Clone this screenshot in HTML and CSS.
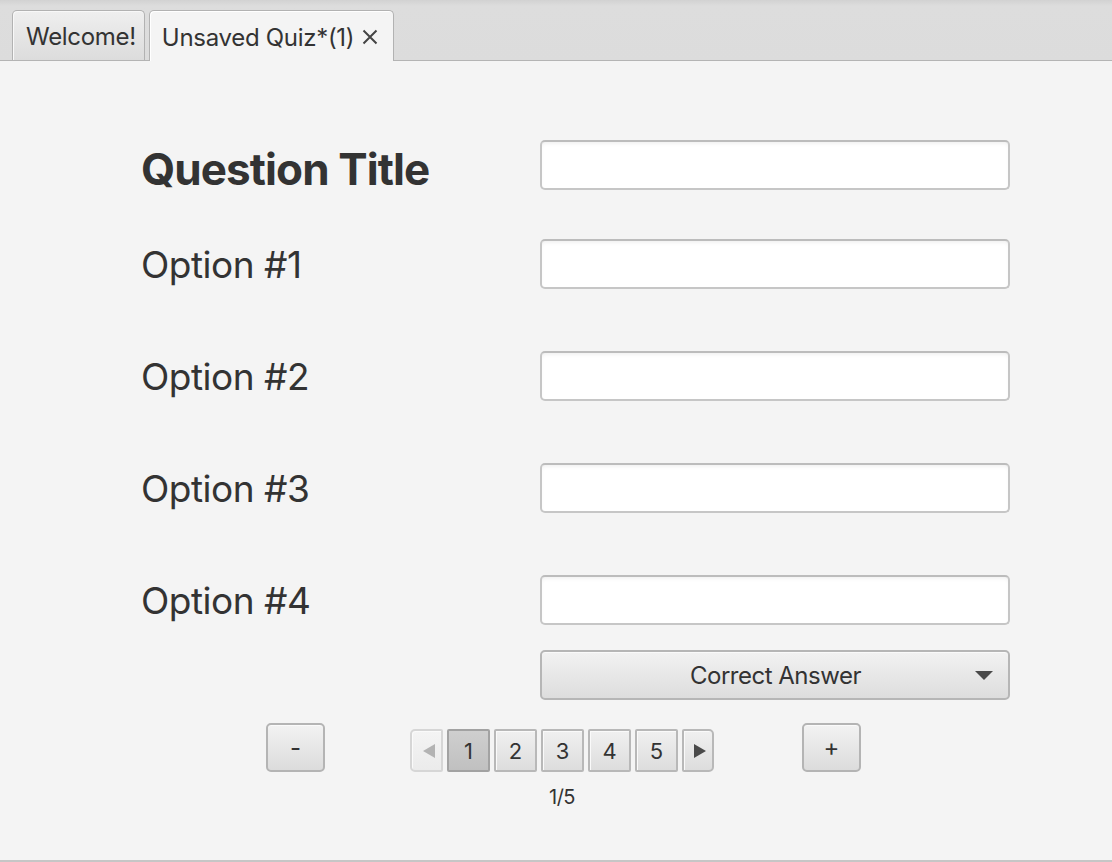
FILE: index.html
```html
<!DOCTYPE html>
<html lang="en">
<head>
<meta charset="utf-8">
<title>Quiz Editor</title>
<link rel="stylesheet" href="styles.css">
</head>
<body>
<div class="window">
  <div class="tabbar">
    <div class="tab">Welcome!</div>
    <div class="tab active">Unsaved Quiz*(1)<svg class="close" width="16" height="16" viewBox="0 0 16 16"><path d="M1.5 1.5L14.5 14.5M14.5 1.5L1.5 14.5" stroke="#444" stroke-width="2" fill="none"/></svg></div>
  </div>
  <div class="content">
    <div class="form">
      <div class="row row-title">
        <div class="label title">Question Title</div>
        <div class="field"></div>
      </div>
      <div class="row row-opt1">
        <div class="label">Option #1</div>
        <div class="field"></div>
      </div>
      <div class="row row-opt">
        <div class="label">Option #2</div>
        <div class="field"></div>
      </div>
      <div class="row row-opt">
        <div class="label">Option #3</div>
        <div class="field"></div>
      </div>
      <div class="row row-opt">
        <div class="label">Option #4</div>
        <div class="field"></div>
      </div>
      <div class="row row-combo">
        <div class="label"></div>
        <div class="combo">
          <span class="combo-text">Correct Answer</span>
          <svg class="combo-arrow" width="18" height="9" viewBox="0 0 18 9"><path d="M0 0H18L9 9Z" fill="#4a4a4a"/></svg>
        </div>
      </div>
    </div>
    <div class="controls">
      <div class="btn">-</div>
      <div class="pager">
        <div class="pages">
          <div class="pbtn prev"><svg width="12" height="14" viewBox="0 0 12 14"><path d="M12 0V14L0 7Z" fill="#b3b3b3"/></svg></div>
          <div class="pbtn page selected">1</div>
          <div class="pbtn page">2</div>
          <div class="pbtn page">3</div>
          <div class="pbtn page">4</div>
          <div class="pbtn page">5</div>
          <div class="pbtn next"><svg width="12" height="14" viewBox="0 0 12 14"><path d="M0 0V14L12 7Z" fill="#4a4a4a"/></svg></div>
        </div>
        <div class="pinfo">1/5</div>
      </div>
      <div class="btn">+</div>
    </div>
  </div>
</div>
</body>
</html>
```
FILE: styles.css
```css
html, body {
  margin: 0;
  padding: 0;
}
body {
  background: #f4f4f4;
  font-family: Inter, "Noto Sans", "Liberation Sans", sans-serif;
  color: #333333;
}
.window {
  width: 1112px;
  height: 862px;
  display: flex;
  flex-direction: column;
  box-sizing: border-box;
  border-bottom: 2px solid #c6c6c6;
}
.tabbar {
  flex-shrink: 0;
  height: 61px;
  box-sizing: border-box;
  background: linear-gradient(#d2d2d2 0px, #dddddd 6px, #dcdcdc 100%);
  border-bottom: 1px solid #b4b4b4;
  display: flex;
  align-items: flex-end;
  gap: 4px;
  padding-left: 12px;
}
.tab {
  flex-shrink: 0;
  height: 50px;
  box-sizing: border-box;
  border: 1px solid #b2b2b2;
  border-bottom: none;
  border-radius: 5px 5px 0 0;
  background: linear-gradient(#efefef, #dcdcdc);
  box-shadow: inset 1px 1px 0 #f8f8f8;
  font-size: 24px;
  letter-spacing: -0.3px;
  color: #333;
  display: flex;
  align-items: center;
  padding: 2px 8px 0 13px;
}
.tab.active {
  background: #f4f4f4;
  height: 51px;
  margin-bottom: -1px;
  padding: 2px 15px 0 12px;
  box-shadow: inset 1px 1px 0 #ffffff;
}
.close {
  margin-left: 8px;
  margin-top: -1px;
}
.content {
  flex: 1;
  display: flex;
  flex-direction: column;
}
.form {
  flex-shrink: 0;
  padding-top: 79px;
  padding-left: 141px;
  display: flex;
  flex-direction: column;
}
.row {
  flex-shrink: 0;
  display: flex;
  align-items: center;
  height: 50px;
}
.row-opt1 { margin-top: 49px; }
.row-opt { margin-top: 62px; }
.row-combo { margin-top: 25px; }
.label {
  width: 399px;
  flex-shrink: 0;
  font-size: 37px;
  letter-spacing: -0.5px;
  color: #333;
}
.label.title {
  font-size: 44px;
  font-weight: 700;
  letter-spacing: -0.9px;
  padding-top: 8px;
}
.field {
  flex-shrink: 0;
  width: 470px;
  height: 50px;
  box-sizing: border-box;
  background: #ffffff;
  border: 2px solid #c6c6c6;
  border-top-color: #bcbcbc;
  border-radius: 5px;
  box-shadow: inset 0 3px 4px -2px rgba(0,0,0,0.08);
}
.combo {
  flex-shrink: 0;
  width: 470px;
  height: 50px;
  box-sizing: border-box;
  border: 2px solid #b6b6b6;
  border-radius: 5px;
  background: linear-gradient(#f2f2f2, #dddddd);
  box-shadow: inset 0 1px 0 #fafafa;
  display: flex;
  align-items: center;
}
.combo-text {
  flex: 1;
  text-align: center;
  font-size: 24px;
  letter-spacing: -0.5px;
  color: #333;
  padding-left: 34px;
  padding-top: 1px;
}
.combo-arrow {
  margin-right: 15px;
}
.controls {
  flex-shrink: 0;
  margin-top: 23px;
  padding-left: 266px;
  display: flex;
  align-items: flex-start;
}
.btn {
  flex-shrink: 0;
  width: 59px;
  height: 49px;
  box-sizing: border-box;
  border: 2px solid #b4b4b4;
  border-radius: 5px;
  background: linear-gradient(#f2f2f2, #dcdcdc);
  box-shadow: inset 0 1px 0 #fafafa;
  display: flex;
  align-items: center;
  justify-content: center;
  font-size: 24px;
  color: #333;
}
.pager {
  flex-shrink: 0;
  margin-left: 85px;
  margin-right: 88px;
  width: 304px;
  padding-top: 6px;
  display: flex;
  flex-direction: column;
  align-items: center;
}
.pages {
  display: flex;
  gap: 4px;
}
.pbtn {
  flex-shrink: 0;
  width: 43px;
  height: 43px;
  box-sizing: border-box;
  border: 2px solid #b8b8b8;
  border-radius: 2px;
  background: linear-gradient(#f0f0f0, #dddddd);
  box-shadow: inset 1px 1px 0 #fafafa;
  display: flex;
  align-items: center;
  justify-content: center;
  font-size: 22px;
  color: #333;
}
.pbtn.selected {
  background: linear-gradient(#cfcfcf, #c0c0c0);
  border-color: #a2a2a2;
  box-shadow: none;
}
.pbtn.prev {
  width: 33px;
  border-radius: 5px 2px 2px 5px;
  border-color: #d6d6d6;
  background: linear-gradient(#f4f4f4, #ebebeb);
  padding-left: 4px;
}
.pbtn.next {
  width: 32px;
  border-radius: 2px 5px 5px 2px;
  padding-left: 4px;
}
.pinfo {
  margin-top: 13px;
  font-size: 20px;
  letter-spacing: -0.5px;
  color: #333;
}
```
